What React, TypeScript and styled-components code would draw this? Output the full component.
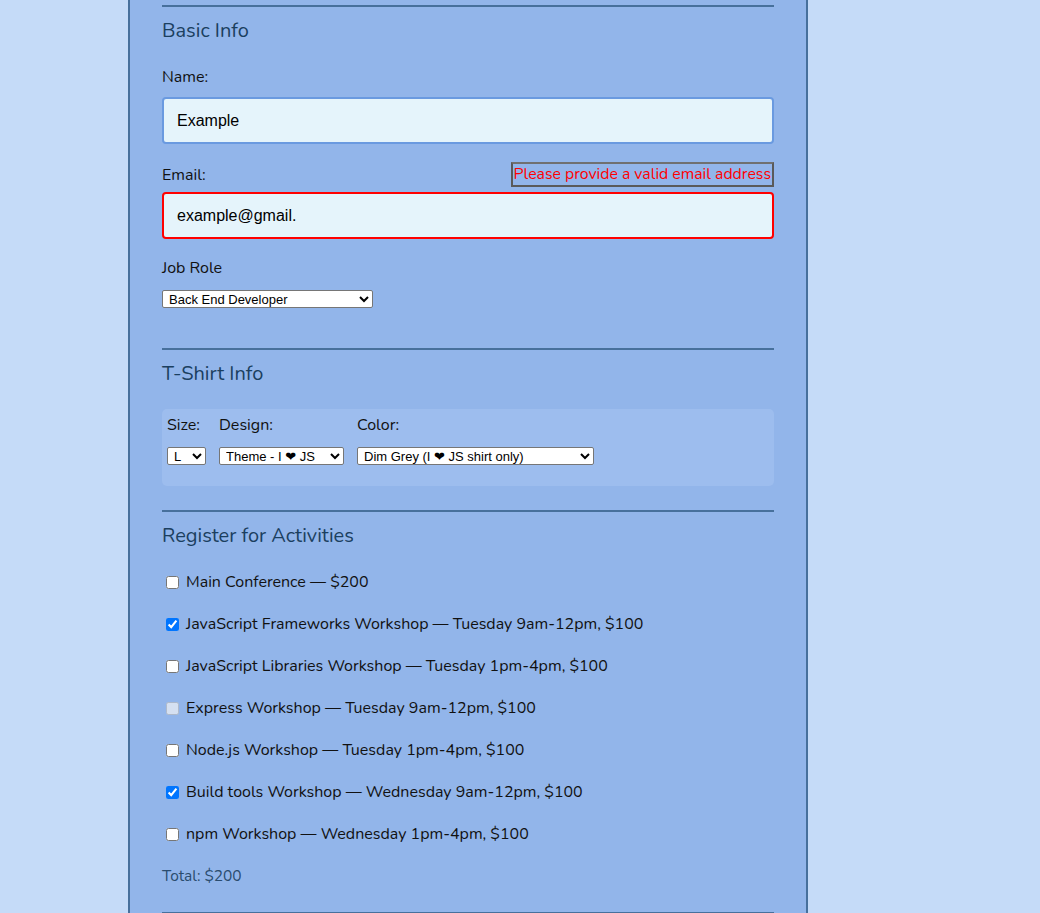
import React from "react";
import styled, { createGlobalStyle } from "styled-components";

const Global = createGlobalStyle`
  html, body { margin: 0; padding: 0; background: #c5dbf8; }
  body { font-family: "Nunito", Lato, "Noto Sans", sans-serif; }
`;

const Page = styled.div`
  display: flex;
  justify-content: flex-start;
  padding-left: 128px;
  min-height: 913px;
`;

const Container = styled.form`
  width: 612px;
  padding: 5px 32px 0;
  background: #92b5ea;
  border-left: 2px solid #47709c;
  border-right: 2px solid #47709c;
`;

const Section = styled.section<{ $pb: number }>`
  border-top: 2px solid #47709c;
  padding-bottom: ${(p) => p.$pb}px;
`;

const Heading = styled.h2`
  margin: 12px 0 0;
  font-size: 20px;
  line-height: 24px;
  font-weight: 400;
  color: #1b3f5f;
`;

const Label = styled.label<{ $mt?: number; $mb?: number }>`
  display: block;
  font-size: 16px;
  line-height: 20px;
  color: #111;
  margin-top: ${(p) => p.$mt ?? 0}px;
  margin-bottom: ${(p) => p.$mb ?? 0}px;
`;

const TextInput = styled.input<{ $invalid?: boolean }>`
  display: block;
  box-sizing: border-box;
  width: 100%;
  height: 47px;
  padding: 0 13px;
  font-family: "Liberation Sans", Arial, sans-serif;
  font-size: 16px;
  color: #000;
  background: #e5f4fb;
  border: 2px solid ${(p) => (p.$invalid ? "#ff0000" : "#6a9ae0")};
  border-radius: 4px;
  outline: none;
`;

const LabelRow = styled.div`
  display: flex;
  justify-content: space-between;
  align-items: center;
  height: 25px;
  margin-top: 18px;
  margin-bottom: 5px;
`;

const Hint = styled.span`
  box-sizing: border-box;
  height: 25px;
  padding: 0 1px;
  border: 2px solid #5a5a5a;
  border-top-color: #707070;
  color: #ff0000;
  font-size: 15.8px;
  line-height: 21px;
  white-space: nowrap;
`;

const Select = styled.select<{ $w: number }>`
  display: block;
  width: ${(p) => p.$w}px;
  height: 18px;
  font-family: "Liberation Sans", "DejaVu Sans", Arial, sans-serif;
  font-size: 13px;
  color: #000;
  background: #fff;
  border: 1px solid #767676;
  border-radius: 2px;
  padding: 0 0 0 2px;
`;

const ShirtBox = styled.div`
  display: flex;
  gap: 13px;
  margin-top: 23px;
  padding: 6px 5px 21px;
  background: #9dbdee;
  border-radius: 5px;
`;

const ShirtCol = styled.div`
  display: flex;
  flex-direction: column;
  gap: 12px;
`;

const ActivityList = styled.div`
  display: flex;
  flex-direction: column;
  gap: 22px;
  margin-top: 24px;
`;

const Activity = styled.label`
  display: flex;
  align-items: center;
  gap: 7px;
  padding-left: 4px;
  font-size: 16px;
  line-height: 20px;
  color: #111;
`;

const Check = styled.input`
  width: 13px;
  height: 13px;
  margin: 0;
`;

const Total = styled.p`
  margin: 22px 0 0;
  font-size: 15.5px;
  line-height: 20px;
  color: #2a4c6e;
`;

const activities = [
  { text: "Main Conference — $200", checked: false },
  { text: "JavaScript Frameworks Workshop — Tuesday 9am-12pm, $100", checked: true },
  { text: "JavaScript Libraries Workshop — Tuesday 1pm-4pm, $100", checked: false },
  { text: "Express Workshop — Tuesday 9am-12pm, $100", checked: false, disabled: true },
  { text: "Node.js Workshop — Tuesday 1pm-4pm, $100", checked: false },
  { text: "Build tools Workshop — Wednesday 9am-12pm, $100", checked: true },
  { text: "npm Workshop — Wednesday 1pm-4pm, $100", checked: false },
];

export default function App() {
  return (
    <>
      <Global />
      <Page>
        <Container onSubmit={(e) => e.preventDefault()}>
          <Section $pb={40}>
            <Heading>Basic Info</Heading>
            <Label $mt={24} $mb={10}>Name:</Label>
            <TextInput defaultValue="Example" />
            <LabelRow>
              <Label>Email:</Label>
              <Hint>Please provide a valid email address</Hint>
            </LabelRow>
            <TextInput $invalid defaultValue="example@gmail." />
            <Label $mt={19} $mb={12}>Job Role</Label>
            <Select $w={211} defaultValue="back">
              <option value="back">Back End Developer</option>
              <option value="front">Front End Developer</option>
            </Select>
          </Section>
          <Section $pb={24}>
            <Heading>T-Shirt Info</Heading>
            <ShirtBox>
              <ShirtCol>
                <Label>Size:</Label>
                <Select $w={39} defaultValue="L">
                  <option value="S">S</option>
                  <option value="M">M</option>
                  <option value="L">L</option>
                </Select>
              </ShirtCol>
              <ShirtCol>
                <Label>Design:</Label>
                <Select $w={125} defaultValue="js">
                  <option value="js">Theme - I ❤ JS</option>
                </Select>
              </ShirtCol>
              <ShirtCol>
                <Label>Color:</Label>
                <Select $w={237} defaultValue="dim">
                  <option value="dim">Dim Grey (I ❤ JS shirt only)</option>
                </Select>
              </ShirtCol>
            </ShirtBox>
          </Section>
          <Section $pb={26}>
            <Heading>Register for Activities</Heading>
            <ActivityList>
              {activities.map((a) => (
                <Activity key={a.text}>
                  <Check type="checkbox" defaultChecked={a.checked} disabled={a.disabled} />
                  {a.text}
                </Activity>
              ))}
            </ActivityList>
            <Total>Total: $200</Total>
          </Section>
          <Section $pb={0} />
        </Container>
      </Page>
    </>
  );
}
